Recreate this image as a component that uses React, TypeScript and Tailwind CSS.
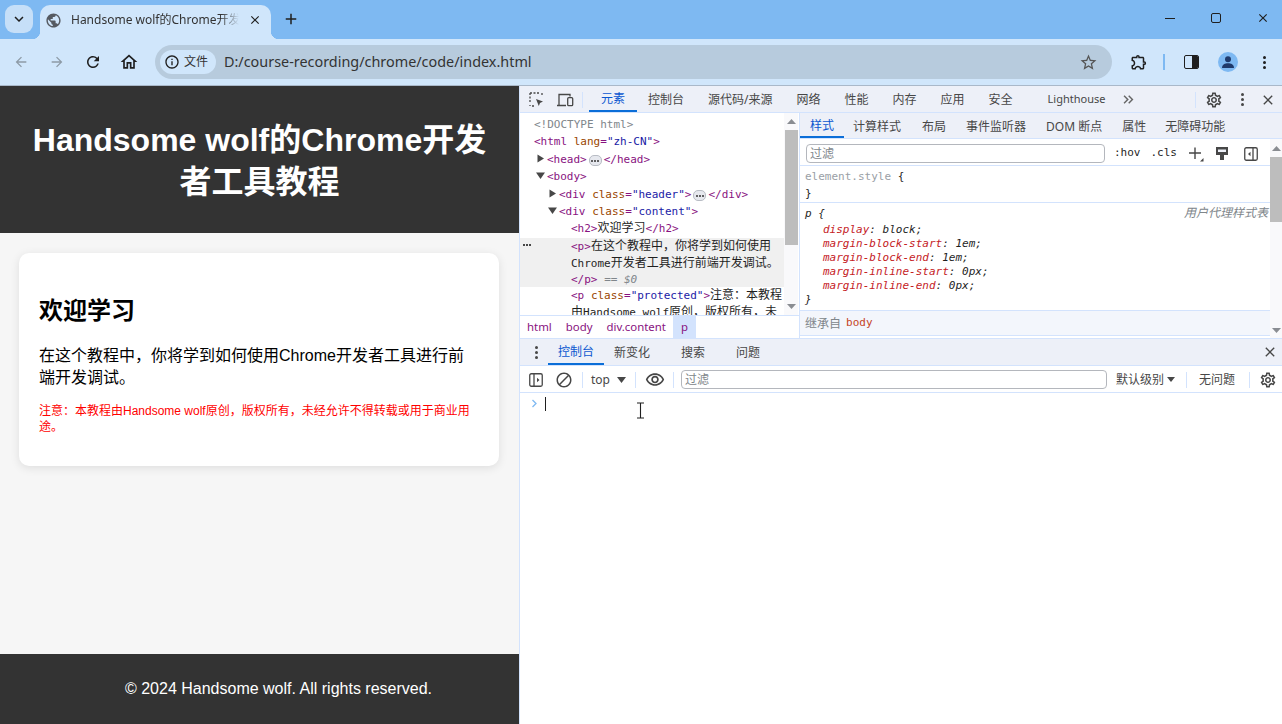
import type { ReactNode } from "react";
import {
  MdArrowBack,
  MdArrowForward,
  MdBlock,
  MdClose,
  MdInfoOutline,
  MdOutlineExtension,
  MdOutlineHome,
  MdOutlineSettings,
  MdOutlineVisibility,
  MdPublic,
  MdRefresh,
  MdStarBorder,
  MdAdd,
  MdKeyboardArrowDown,
  MdKeyboardDoubleArrowRight,
} from "react-icons/md";

const uiFont = "font-['Noto_Sans','Noto_Sans_CJK_SC',sans-serif]";
const monoFont = "font-['DejaVu_Sans_Mono','Noto_Sans_CJK_SC',monospace]";

function Dots({ className }: { className?: string }) {
  return (
    <span className={`flex flex-col items-center gap-[2px] ${className ?? ""}`}>
      <i className="h-[3px] w-[3px] rounded-full bg-current" />
      <i className="h-[3px] w-[3px] rounded-full bg-current" />
      <i className="h-[3px] w-[3px] rounded-full bg-current" />
    </span>
  );
}

function Tri({ dir }: { dir: "right" | "down" }) {
  return (
    <svg width="9" height="9" viewBox="0 0 9 9" className="shrink-0 text-[#474747]" fill="currentColor">
      {dir === "right" ? <path d="M1.5 0.5 L8 4.5 L1.5 8.5 Z" /> : <path d="M0 1.5 L9 1.5 L4.5 8 Z" />}
    </svg>
  );
}

function Ellipsis() {
  return (
    <span className="mx-[2px] inline-flex h-[11px] w-[13px] items-center justify-center gap-[1px] rounded-[5px] border border-[#b8bcc4] bg-[#e6e8ee] align-[1px]">
      <i className="h-[2px] w-[2px] rounded-full bg-[#333]" />
      <i className="h-[2px] w-[2px] rounded-full bg-[#333]" />
      <i className="h-[2px] w-[2px] rounded-full bg-[#333]" />
    </span>
  );
}

const T = ({ children }: { children: ReactNode }) => <span className="text-[#881280]">{children}</span>;
const A = ({ children }: { children: ReactNode }) => <span className="text-[#994500]">{children}</span>;
const V = ({ children }: { children: ReactNode }) => <span className="text-[#1a1aa6]">{children}</span>;
const C = ({ children }: { children: ReactNode }) => <span className="text-[12px] text-[#1f1f1f]">{children}</span>;

function Row({ indent, tri, children }: { indent: string; tri?: "right" | "down"; children: ReactNode }) {
  return (
    <div className={`relative h-[17.4px] whitespace-nowrap leading-[17.4px] ${indent}`}>
      {tri ? (
        <span className="absolute top-[3px] -ml-[11px]">
          <Tri dir={tri} />
        </span>
      ) : null}
      {children}
    </div>
  );
}

function ScrollArrow({ dir }: { dir: "up" | "down" }) {
  return (
    <svg width="9" height="5" viewBox="0 0 9 5" className="text-[#8a8d92]" fill="currentColor">
      {dir === "up" ? <path d="M4.5 0 L9 5 L0 5 Z" /> : <path d="M0 0 L9 0 L4.5 5 Z" />}
    </svg>
  );
}

function Prop({ name, value }: { name: string; value: string }) {
  return (
    <div className="h-[14px] pl-[18px] leading-[14px]">
      <span className="text-[#c5221f]">{name}</span>
      <span className="text-[#1f1f1f]">: {value};</span>
    </div>
  );
}

function Sep({ className }: { className?: string }) {
  return <span className={`h-[16px] w-px bg-[#d3e3fd] ${className ?? ""}`} />;
}

function BrowserChrome() {
  return (
    <header className={`shrink-0 ${uiFont}`}>
      <div className="flex h-[39px] items-end bg-[#7eb9f2]">
        <div className="mb-[6px] ml-[5px] flex h-[28px] w-[28px] items-center justify-center rounded-[9px] bg-[#c6dff8]">
          <MdKeyboardArrowDown className="text-[18px] text-[#1f1f1f]" />
        </div>
        <div className="relative ml-[7px] flex h-[34px] w-[231px] items-center rounded-t-[10px] bg-[#d0e6fb] pb-[4px] pl-[5px]">
          <span className="absolute -left-[8px] bottom-0 h-[8px] w-[8px] bg-[radial-gradient(circle_at_0_0,#7eb9f2_8px,#d0e6fb_8.5px)]" />
          <span className="absolute -right-[8px] bottom-0 h-[8px] w-[8px] bg-[radial-gradient(circle_at_100%_0,#7eb9f2_8px,#d0e6fb_8.5px)]" />
          <MdPublic className="text-[17px] text-[#555a61]" />
          <span className="ml-[9px] w-[168px] overflow-hidden whitespace-nowrap text-[12px] text-[#333] [mask-image:linear-gradient(to_right,black_150px,transparent_168px)]">
            Handsome wolf的Chrome开发者工具教程
          </span>
          <MdClose className="ml-[9px] text-[14px] text-[#1f1f1f]" />
        </div>
        <MdAdd className="mb-[11px] ml-[11px] text-[18px] text-[#1f1f1f]" />
        <div className="mb-[14px] ml-auto flex items-center text-[#1f1f1f]">
          <span className="h-px w-[10px] bg-[#1f1f1f]" />
          <span className="ml-[36px] h-[10px] w-[10px] rounded-[2px] border border-[#1f1f1f]" />
          <MdClose className="ml-[35px] mr-[12px] text-[14px]" />
        </div>
      </div>
      <div className="flex h-[47px] items-center border-b border-[#a9b8c9] bg-[#d0e6fb]">
        <MdArrowBack className="ml-[13px] text-[16px] text-[#8d9aa6]" />
        <MdArrowForward className="ml-[20px] text-[16px] text-[#8d9aa6]" />
        <MdRefresh className="ml-[19px] text-[18px] text-[#1f1f1f]" />
        <MdOutlineHome className="ml-[17px] text-[20px] text-[#1f1f1f]" />
        <div className="ml-[16px] flex h-[34px] w-[957px] items-center rounded-full bg-[#b7cbdd] pl-[5px]">
          <div className="flex h-[24px] w-[56px] items-center rounded-full bg-[#d0e6fb] pl-[4px]">
            <MdInfoOutline className="text-[16px] text-[#1f1f1f]" />
            <span className="ml-[4px] text-[12px] text-[#333]">文件</span>
          </div>
          <span className="ml-[8px] text-[14.4px] text-[#333]">D:/course-recording/chrome/code/index.html</span>
          <MdStarBorder className="ml-auto mr-[14px] text-[19px] text-[#555]" />
        </div>
        <MdOutlineExtension className="ml-[18px] text-[18px] text-[#1f1f1f]" />
        <span className="ml-[15px] h-[16px] w-[2px] bg-[#7eb9f2]" />
        <span className="ml-[19px] flex h-[14px] w-[15px] overflow-hidden rounded-[2px] border-[1.5px] border-[#1f1f1f]">
          <i className="w-1/2" />
          <i className="w-1/2 bg-[#1f1f1f]" />
        </span>
        <span className="ml-[19px] flex h-[20px] w-[20px] items-center justify-center rounded-full bg-[#7eb9f2]">
          <svg width="14" height="14" viewBox="0 0 14 14" fill="#1f3a6b">
            <circle cx="7" cy="4.3" r="3" />
            <path d="M1 13 C1 9.5 4 8.3 7 8.3 C10 8.3 13 9.5 13 13 Z" />
          </svg>
        </span>
        <Dots className="ml-[25px] text-[#1f1f1f]" />
      </div>
    </header>
  );
}

function Page() {
  return (
    <section className="flex h-full w-[520px] shrink-0 flex-col border-r border-[#d3e3fd] bg-[#f6f6f6] font-['Liberation_Sans','Noto_Sans_CJK_SC',sans-serif]">
      <div className="flex h-[147px] shrink-0 items-center justify-center bg-[#333] px-[20px] pt-[2px] text-center text-[32px] font-bold leading-[42px] text-white">
        Handsome wolf的Chrome开发者工具教程
      </div>
      <div className="flex-1 p-[20px] pl-[19px]">
        <article className="h-[213px] w-[480px] rounded-[10px] bg-white p-[20px] pt-[44px] shadow-[0_2px_10px_rgba(0,0,0,0.1)]">
          <h2 className="text-[24px] font-bold leading-[28px] text-black">欢迎学习</h2>
          <p className="mt-[20px] text-[16px] leading-[22px] text-black">
            在这个教程中，你将学到如何使用Chrome开发者工具进行前端开发调试。
          </p>
          <p className="mt-[14px] text-[12px] leading-[16px] text-[#ff0000]">
            注意：本教程由Handsome wolf原创，版权所有，未经允许不得转载或用于商业用途。
          </p>
        </article>
      </div>
      <div className="flex h-[70px] shrink-0 items-center justify-center bg-[#333] pl-[38px] text-[16px] text-white">
        © 2024 Handsome wolf. All rights reserved.
      </div>
    </section>
  );
}

function ElementsPanel() {
  return (
    <div className="flex w-[280px] shrink-0 flex-col border-r border-[#d3e3fd]">
      <div className="flex h-[202px] overflow-hidden">
        <div className={`relative flex-1 overflow-hidden pt-[3px] text-[11px] text-[#5f6368] ${monoFont}`}>
          <Row indent="pl-[14px]">
            <span className="text-[#80868b]">{"<!DOCTYPE html>"}</span>
          </Row>
          <Row indent="pl-[14px]">
            <T>{"<html"}</T> <A>lang</A>
            <T>=</T>
            <V>"zh-CN"</V>
            <T>{">"}</T>
          </Row>
          <Row indent="pl-[27px]" tri="right">
            <T>{"<head>"}</T>
            <Ellipsis />
            <T>{"</head>"}</T>
          </Row>
          <Row indent="pl-[27px]" tri="down">
            <T>{"<body>"}</T>
          </Row>
          <Row indent="pl-[39px]" tri="right">
            <T>{"<div"}</T> <A>class</A>
            <T>=</T>
            <V>"header"</V>
            <T>{">"}</T>
            <Ellipsis />
            <T>{"</div>"}</T>
          </Row>
          <Row indent="pl-[39px]" tri="down">
            <T>{"<div"}</T> <A>class</A>
            <T>=</T>
            <V>"content"</V>
            <T>{">"}</T>
          </Row>
          <Row indent="pl-[51px]">
            <T>{"<h2>"}</T>
            <C>欢迎学习</C>
            <T>{"</h2>"}</T>
          </Row>
          <div className="relative bg-[#f0f0f0] pl-[51px]">
            <span className="absolute left-[3px] top-[6px] flex gap-[1px]">
              <i className="h-[2px] w-[2px] bg-[#474747]" />
              <i className="h-[2px] w-[2px] bg-[#474747]" />
              <i className="h-[2px] w-[2px] bg-[#474747]" />
            </span>
            <div className="h-[17px] whitespace-nowrap leading-[17px]">
              <T>{"<p>"}</T>
              <C>在这个教程中，你将学到如何使用</C>
            </div>
            <div className="h-[17px] whitespace-nowrap leading-[17px]">
              <span className="text-[#1f1f1f]">Chrome</span>
              <C>开发者工具进行前端开发调试。</C>
            </div>
            <div className="h-[15px] whitespace-nowrap leading-[15px]">
              <T>{"</p>"}</T> <span className="italic text-[#80868b]">== $0</span>
            </div>
          </div>
          <div className="h-[17px] whitespace-nowrap pl-[51px] leading-[17px]">
            <T>{"<p"}</T> <A>class</A>
            <T>=</T>
            <V>"protected"</V>
            <T>{">"}</T>
            <C>注意：本教程</C>
          </div>
          <div className="h-[17px] whitespace-nowrap pl-[51px] leading-[17px]">
            <C>由</C>
            <span className="text-[#1f1f1f]">Handsome wolf</span>
            <C>原创，版权所有，未</C>
          </div>
        </div>
        <div className="flex w-[14px] shrink-0 flex-col items-center bg-[#f9f9fb]">
          <div className="flex h-[17px] items-center">
            <ScrollArrow dir="up" />
          </div>
          <div className="h-[115px] w-[13px] bg-[#bdbdbd]" />
          <div className="flex-1" />
          <div className="flex h-[17px] items-center">
            <ScrollArrow dir="down" />
          </div>
        </div>
        <div className="w-px shrink-0 bg-white" />
      </div>
      <div className={`flex h-[23px] items-stretch border-t border-[#d3e3fd] text-[11.4px] text-[#881280] ${uiFont}`}>
        <span className="flex items-center px-[7px]">html</span>
        <span className="flex items-center px-[7px]">body</span>
        <span className="flex items-center px-[7px]">div.content</span>
        <span className="flex items-center bg-[#d3e3fd] px-[8px]">p</span>
      </div>
    </div>
  );
}

function StylesPanel() {
  const tabs: [string, string][] = [
    ["计算样式", "ml-[9px]"],
    ["布局", "ml-[21px]"],
    ["事件监听器", "ml-[20px]"],
    ["DOM 断点", "ml-[20px]"],
    ["属性", "ml-[20px]"],
    ["无障碍功能", "ml-[19px]"],
  ];
  return (
    <div className="flex min-w-0 flex-1 flex-col">
      <div className={`flex h-[26px] shrink-0 items-stretch border-b border-[#d3e3fd] bg-[#edf0f8] text-[12px] text-[#474747] ${uiFont}`}>
        <span className="flex w-[44px] items-center justify-center border-b-2 border-[#0b6ed8] pt-[3px] text-[#0b57d0]">样式</span>
        {tabs.map(([label, margin]) => (
          <span key={label} className={`flex items-center whitespace-nowrap pt-[3px] ${margin}`}>
            {label}
          </span>
        ))}
      </div>
      <div className="flex min-h-0 flex-1">
        <div className="min-w-0 flex-1">
          <div className="flex h-[27px] items-center border-b border-[#d3e3fd] pl-[6px] pt-[3px]">
            <div className={`flex h-[19px] w-[299px] items-center rounded-[4px] border border-[#b4b7bd] pl-[3px] text-[12px] text-[#80868b] ${uiFont}`}>
              过滤
            </div>
            <span className={`ml-[9px] text-[11px] font-medium text-[#1f1f1f] ${monoFont}`}>:hov</span>
            <span className={`ml-[10px] text-[11px] font-medium text-[#1f1f1f] ${monoFont}`}>.cls</span>
            <svg width="16" height="16" viewBox="0 0 16 16" className="ml-[11px] text-[#474747]">
              <path d="M7 1.5 V13 M1 7 H13" stroke="currentColor" strokeWidth="1.4" />
              <path d="M15.5 12 V15.5 H12 Z" fill="currentColor" />
            </svg>
            <svg width="14" height="15" viewBox="0 0 14 15" className="ml-[11px] text-[#474747]">
              <path d="M1 1 H13 V9 H9 V14 H5 V9 H1 Z" fill="currentColor" />
              <path d="M3 3.5 H11 V6 H3 Z" fill="#edf0f8" />
            </svg>
            <svg width="14" height="14" viewBox="0 0 14 14" className="ml-[15px] text-[#474747]" fill="none" stroke="currentColor">
              <rect x="0.75" y="0.75" width="12.5" height="12.5" rx="1.5" strokeWidth="1.3" />
              <path d="M9 1 V13" strokeWidth="1.3" />
              <path d="M6.5 4.8 V9.2 L4 7 Z" fill="currentColor" stroke="none" />
            </svg>
          </div>
          <div className={`text-[11px] text-[#1f1f1f] ${monoFont}`}>
            <div className="h-[37px] border-b border-[#d3e3fd] pl-[5px] pt-[2px] leading-[17px]">
              <div>
                <span className="text-[#9aa0a6]">element.style</span> <span className="text-[#1f1f1f]">{"{"}</span>
              </div>
              <div>{"}"}</div>
            </div>
            <div className="relative h-[107px] pl-[5px] pt-[2px] italic">
              <span className={`absolute right-[2px] top-[1px] text-[12px] text-[#80868b] ${uiFont}`}>用户代理样式表</span>
              <div className="h-[18px] leading-[17px]">p {"{"}</div>
              <Prop name="display" value="block" />
              <Prop name="margin-block-start" value="1em" />
              <Prop name="margin-block-end" value="1em" />
              <Prop name="margin-inline-start" value="0px" />
              <Prop name="margin-inline-end" value="0px" />
              <div className="h-[14px] leading-[14px]">{"}"}</div>
            </div>
            <div className="flex h-[26px] items-center border-y border-[#d3e3fd] bg-[#f3f6fc] pl-[5px] pt-[1px]">
              <span className={`text-[12px] text-[#80868b] ${uiFont}`}>继承自</span>
              <span className="ml-[5px] text-[#c5441f]">body</span>
            </div>
          </div>
        </div>
        <div className="flex w-[12px] shrink-0 flex-col items-center bg-[#f9f9fb]">
          <div className="flex h-[18px] items-center">
            <ScrollArrow dir="up" />
          </div>
          <div className="h-[65px] w-[12px] bg-[#bdbdbd]" />
          <div className="flex-1" />
          <div className="flex h-[16px] items-center">
            <ScrollArrow dir="down" />
          </div>
        </div>
      </div>
    </div>
  );
}

function TopTabs() {
  const tabs: [string, string][] = [
    ["控制台", "ml-[11px]"],
    ["源代码/来源", "ml-[24px]"],
    ["网络", "ml-[24px]"],
    ["性能", "ml-[24px]"],
    ["内存", "ml-[24px]"],
    ["应用", "ml-[24px]"],
    ["安全", "ml-[24px]"],
    ["Lighthouse", "ml-[35px] text-[11px]"],
  ];
  return (
    <div className={`flex h-[27px] shrink-0 items-stretch border-b border-[#d3e3fd] bg-[#edf0f8] pt-[1px] text-[12px] text-[#474747] ${uiFont}`}>
      <svg width="16" height="16" viewBox="0 0 16 16" className="ml-[9px] self-center text-[#474747]" fill="none" stroke="currentColor">
        <path d="M1 1 H11 M1 1 V11 M1 13 V14 M3 14 H5 M13 1 V4" strokeWidth="1.3" strokeDasharray="2 1.5" />
        <path d="M7 7 L14 9.5 L11 11 L9.8 14 Z" fill="currentColor" stroke="none" />
      </svg>
      <svg width="18" height="14" viewBox="0 0 18 14" className="ml-[11px] self-center text-[#474747]" fill="none" stroke="currentColor" strokeWidth="1.3">
        <path d="M1 12.5 H10 M3 12 V1.5 H14 V3.5" />
        <rect x="11.7" y="4.7" width="5" height="8" rx="1" />
      </svg>
      <Sep className="ml-[8px] self-center" />
      <span className="ml-[6px] flex w-[48px] items-center justify-center border-b-2 border-[#0b6ed8] text-[#0b57d0]">元素</span>
      {tabs.map(([label, margin]) => (
        <span key={label} className={`flex items-center whitespace-nowrap ${margin}`}>
          {label}
        </span>
      ))}
      <MdKeyboardDoubleArrowRight className="ml-[15px] self-center text-[17px] text-[#666]" />
      <Sep className="ml-[58px] self-center" />
      <MdOutlineSettings className="ml-[9px] self-center text-[18px] text-[#474747]" />
      <Dots className="ml-[18px] self-center text-[#474747]" />
      <MdClose className="ml-[16px] self-center text-[16px] text-[#474747]" />
    </div>
  );
}

function Console() {
  return (
    <div className={`relative flex min-h-0 flex-1 flex-col ${uiFont}`}>
      <div className="flex h-[28px] shrink-0 items-stretch border-y border-[#d3e3fd] bg-[#edf0f8] text-[12px] text-[#474747]">
        <Dots className="ml-[15px] justify-center self-center" />
        <span className="ml-[10px] flex w-[56px] items-center justify-center border-b-2 border-[#0b6ed8] pt-[1px] text-[#0b57d0]">控制台</span>
        <span className="ml-[10px] flex items-center pt-[1px]">新变化</span>
        <span className="ml-[31px] flex items-center pt-[1px]">搜索</span>
        <span className="ml-[31px] flex items-center pt-[1px]">问题</span>
        <MdClose className="ml-auto mr-[4px] self-center text-[16px]" />
      </div>
      <div className="flex h-[27px] shrink-0 items-center border-b border-[#d3e3fd] pt-[1px] text-[12px] text-[#474747]">
        <svg width="14" height="14" viewBox="0 0 14 14" className="ml-[9px]" fill="none" stroke="currentColor">
          <rect x="0.75" y="0.75" width="12.5" height="12.5" rx="1.5" strokeWidth="1.3" />
          <path d="M5 1 V13" strokeWidth="1.3" />
          <path d="M8 4.8 V9.2 L10.5 7 Z" fill="currentColor" stroke="none" />
        </svg>
        <MdBlock className="ml-[12px] text-[18px]" />
        <Sep className="ml-[9px]" />
        <span className="ml-[8px]">top</span>
        <svg width="9" height="6" viewBox="0 0 9 6" className="ml-[7px]" fill="currentColor">
          <path d="M0 0 H9 L4.5 6 Z" />
        </svg>
        <Sep className="ml-[9px]" />
        <MdOutlineVisibility className="ml-[9px] text-[20px]" />
        <Sep className="ml-[8px]" />
        <div className="ml-[7px] flex h-[19px] w-[426px] items-center rounded-[4px] border border-[#b4b7bd] pl-[3px] text-[#80868b]">过滤</div>
        <span className="ml-[9px]">默认级别</span>
        <svg width="8" height="5" viewBox="0 0 8 5" className="ml-[3px]" fill="currentColor">
          <path d="M0 0 H8 L4 5 Z" />
        </svg>
        <Sep className="ml-[11px]" />
        <span className="ml-[12px]">无问题</span>
        <Sep className="ml-[14px]" />
        <MdOutlineSettings className="ml-[9px] text-[18px]" />
      </div>
      <div className="flex flex-1 items-start bg-white pl-[11px] pt-[4px]">
        <svg width="7" height="9" viewBox="0 0 7 9" className="mt-[2px] text-[#7eb9f2]" fill="none" stroke="currentColor" strokeWidth="1.3">
          <path d="M1.5 1 L5 4.5 L1.5 8" />
        </svg>
        <span className="ml-[7px] h-[14px] w-px bg-[#1f1f1f]" />
      </div>
      <svg width="9" height="17" viewBox="0 0 9 17" className="absolute left-[116px] top-[64px]" fill="none" stroke="#1f1f1f" strokeWidth="1.1">
        <path d="M1 1 H8 M4.5 1 V16 M1 16 H8" />
      </svg>
    </div>
  );
}

function DevTools() {
  return (
    <section className="flex min-w-0 flex-1 flex-col bg-white">
      <TopTabs />
      <div className="flex h-[225px] shrink-0 border-t-0">
        <ElementsPanel />
        <StylesPanel />
      </div>
      <Console />
    </section>
  );
}

export default function App() {
  return (
    <div className="flex h-[724px] w-[1282px] flex-col overflow-hidden bg-white">
      <BrowserChrome />
      <main className="flex min-h-0 flex-1">
        <Page />
        <DevTools />
      </main>
    </div>
  );
}
